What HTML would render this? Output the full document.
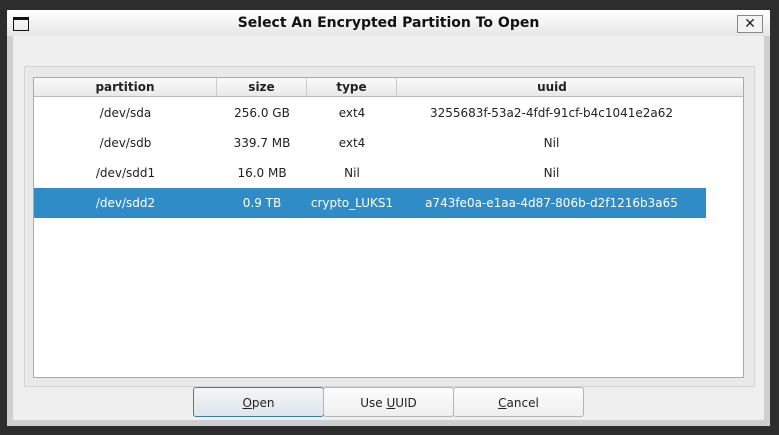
<!DOCTYPE html>
<html><head><style>
body{margin:0;width:779px;height:435px;background:#2d2d2d;position:relative;overflow:hidden;font-family:"DejaVu Sans","Liberation Sans",sans-serif;font-size:12px;color:#222}
.win{position:absolute;left:7px;top:10px;width:763px;height:416px;background:#cfcfcf}
.body{position:absolute;left:13px;top:36px;width:751px;height:384px;background:#efefef}
.title{position:absolute;left:7px;top:10px;width:763px;height:26px;background:linear-gradient(#fff,#e6e6e6);border-radius:2px 2px 0 0}
.title .t{position:absolute;left:0;right:0;top:5px;text-align:center;font-weight:bold;font-size:14px;color:#111}
.ic{position:absolute;left:6px;top:7px;width:16px;height:14px;border:1.5px solid #111;border-top-width:3px;box-sizing:border-box}
.x{position:absolute;left:730px;top:5px;width:26px;height:18px;border:1px solid #888;background:#f4f4f4;box-sizing:border-box;text-align:center;font-size:14px;line-height:16px;font-weight:bold}
.grp{position:absolute;left:24px;top:66px;width:731px;height:321px;border:1px solid #d4d4d4;background:#e9e9e9;box-sizing:border-box}
.tbl{position:absolute;left:33px;top:77px;width:711px;height:301px;border:1px solid #aaa;background:#fff;box-sizing:border-box}
.hdr{position:absolute;left:0;top:0;width:709px;height:19px;background:linear-gradient(#fafafa,#e9e9e9);border-bottom:1px solid #bbb;box-sizing:border-box}
.c{position:absolute;text-align:center;top:0;height:100%;box-sizing:border-box}
.hdr .c{font-weight:bold;line-height:19px;border-right:1px solid #ccc}
.row{position:absolute;left:0;width:672px;height:30px;line-height:30px}
.sel{background:#308cc6;color:#fff}
.btn{position:absolute;top:387px;height:30px;width:131px;box-sizing:border-box;border:1px solid #b4b4b4;border-radius:3px;background:linear-gradient(#fcfcfc,#efefef);text-align:center;line-height:30px}
.btn u{text-decoration:underline}
</style></head><body>
<div class="win"></div>
<div class="body"></div>
<div class="title"><div class="ic"></div><div class="t">Select An Encrypted Partition To Open</div><div class="x">✕</div></div>
<div class="grp"></div>
<div class="tbl">
<div class="hdr">
<div class="c" style="left:0;width:183px">partition</div>
<div class="c" style="left:183px;width:90px">size</div>
<div class="c" style="left:273px;width:90px">type</div>
<div class="c" style="left:363px;width:310px;border-right:none">uuid</div>
</div>
<div class="row" style="top:20px"><div class="c" style="left:0;width:183px">/dev/sda</div><div class="c" style="left:183px;width:90px">256.0 GB</div><div class="c" style="left:273px;width:90px">ext4</div><div class="c" style="left:363px;width:309px">3255683f-53a2-4fdf-91cf-b4c1041e2a62</div></div>
<div class="row" style="top:50px"><div class="c" style="left:0;width:183px">/dev/sdb</div><div class="c" style="left:183px;width:90px">339.7 MB</div><div class="c" style="left:273px;width:90px">ext4</div><div class="c" style="left:363px;width:309px">Nil</div></div>
<div class="row" style="top:80px"><div class="c" style="left:0;width:183px">/dev/sdd1</div><div class="c" style="left:183px;width:90px">16.0 MB</div><div class="c" style="left:273px;width:90px">Nil</div><div class="c" style="left:363px;width:309px">Nil</div></div>
<div class="row sel" style="top:110px"><div class="c" style="left:0;width:183px">/dev/sdd2</div><div class="c" style="left:183px;width:90px">0.9 TB</div><div class="c" style="left:273px;width:90px">crypto_LUKS1</div><div class="c" style="left:363px;width:309px">a743fe0a-e1aa-4d87-806b-d2f1216b3a65</div></div>
</div>
<div class="btn" style="left:193px;border-color:#3a7fb0;background:linear-gradient(#f3f6f9,#dfe5ec)"><u>O</u>pen</div>
<div class="btn" style="left:323px">Use <u>U</u>UID</div>
<div class="btn" style="left:453px"><u>C</u>ancel</div>
</body></html>
